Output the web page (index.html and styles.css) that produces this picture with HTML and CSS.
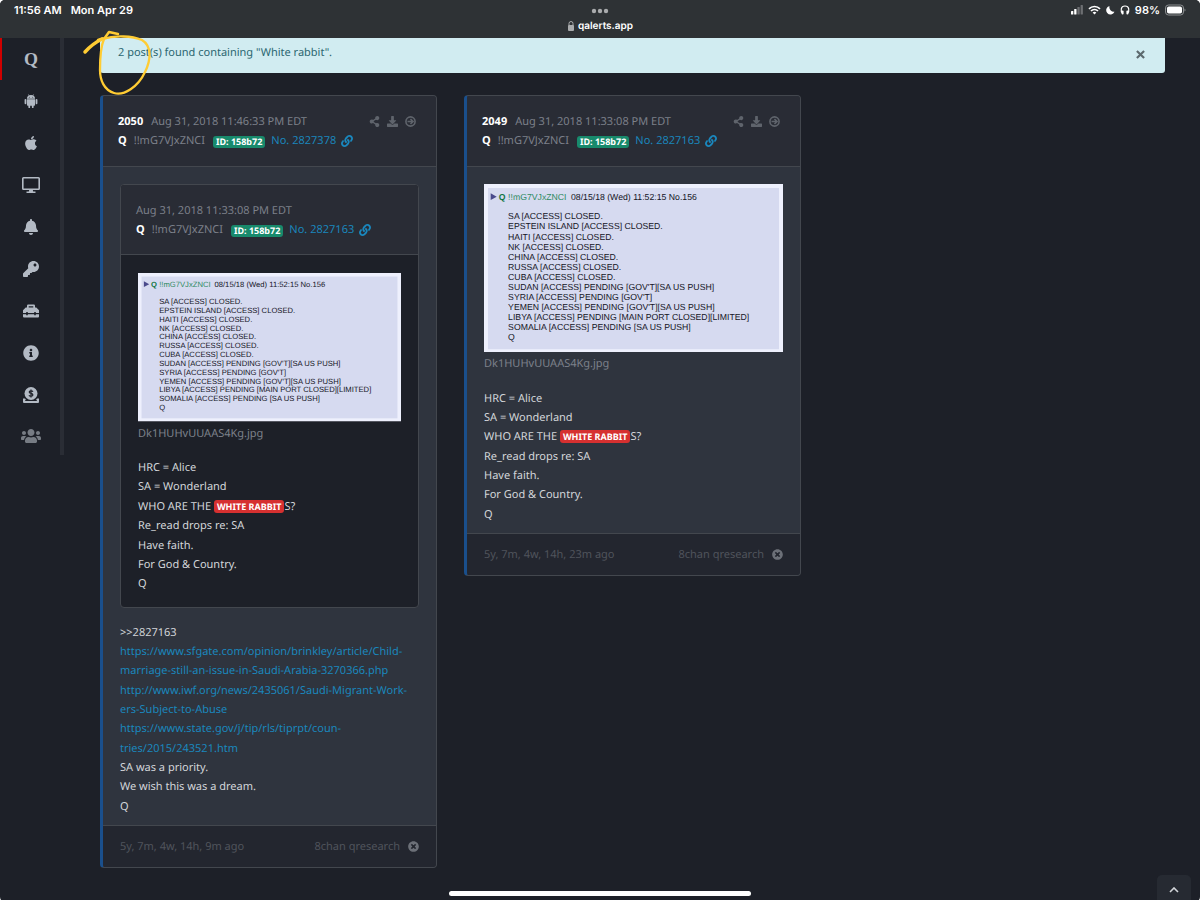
FILE: index.html
```html
<!DOCTYPE html>
<html lang="en">
<head>
<meta charset="utf-8">
<meta name="viewport" content="width=device-width, initial-scale=1">
<title>qalerts.app</title>
<link rel="stylesheet" href="styles.css">
</head>
<body>
<svg class="defs" aria-hidden="true">
  <symbol id="share" viewBox="0 0 448 512"><path d="M352 320c-22.608 0-43.387 7.819-59.79 20.895l-102.486-64.054a96.551 96.551 0 0 0 0-41.683l102.486-64.054C308.613 184.181 329.392 192 352 192c53.019 0 96-42.981 96-96S405.019 0 352 0s-96 42.981-96 96c0 7.158.79 14.13 2.276 20.841L155.79 180.895C139.387 167.819 118.608 160 96 160c-53.019 0-96 42.981-96 96s42.981 96 96 96c22.608 0 43.387-7.819 59.79-20.895l102.486 64.054A96.301 96.301 0 0 0 256 416c0 53.019 42.981 96 96 96s96-42.981 96-96-42.981-96-96-96z"/></symbol>
  <symbol id="download" viewBox="0 0 512 512"><path d="M216 0h80c13.3 0 24 10.7 24 24v168h87.700c17.8 0 26.7 21.5 14.1 34.1L269.7 378.3c-7.5 7.5-19.8 7.5-27.3 0L90.1 226.1c-12.6-12.6-3.7-34.1 14.1-34.1H192V24c0-13.3 10.7-24 24-24zm296 376v112c0 13.3-10.7 24-24 24H24c-13.3 0-24-10.7-24-24V376c0-13.3 10.7-24 24-24h146.7l49 49c20.1 20.1 52.5 20.1 72.6 0l49-49H488c13.3 0 24 10.7 24 24z"/></symbol>
  <symbol id="arrow" viewBox="0 0 24 24"><circle cx="12" cy="12" r="10" fill="none" stroke="currentColor" stroke-width="3.500"/><path d="M5.500 12H17M12 6.500l5.500 5.500-5.500 5.500" fill="none" stroke="currentColor" stroke-width="3.500"/></symbol>
  <symbol id="times" viewBox="0 0 512 512"><path d="M256 8C119 8 8 119 8 256s111 248 248 248 248-111 248-248S393 8 256 8zm121.6 313.1c4.7 4.7 4.7 12.3 0 17L338 377.6c-4.7 4.7-12.3 4.7-17 0L256 312l-65.1 65.6c-4.7 4.7-12.3 4.7-17 0L134.4 338c-4.7-4.7-4.7-12.3 0-17l65.6-65-65.6-65.1c-4.7-4.7-4.7-12.3 0-17l39.6-39.6c4.7-4.7 12.3-4.7 17 0l65 65.7 65.1-65.600c4.7-4.7 12.3-4.7 17 0l39.6 39.6c4.7 4.7 4.7 12.3 0 17L312 256l65.6 65.100z"/></symbol>
  <symbol id="link" viewBox="0 0 512 512"><path d="M326.612 185.391c59.747 59.809 58.927 155.698.36 214.59-.11.12-.24.25-.36.37l-67.2 67.2c-59.27 59.27-155.699 59.262-214.96 0-59.27-59.26-59.27-155.7 0-214.96l37.106-37.106c9.84-9.84 26.786-3.3 27.294 10.606.648 17.722 3.826 35.527 9.69 52.721 1.986 5.822.567 12.262-3.783 16.612l-13.087 13.087c-28.026 28.026-28.905 73.66-1.155 101.96 28.024 28.579 74.086 28.749 102.325.51l67.2-67.19c28.191-28.191 28.073-73.757 0-101.83-3.701-3.694-7.429-6.564-10.341-8.569a16.037 16.037 0 0 1-6.947-12.606c-.396-10.567 3.348-21.456 11.698-29.806l21.054-21.055c5.521-5.521 14.182-6.199 20.584-1.731a152.482 152.482 0 0 1 20.522 17.197zM467.547 44.449c-59.261-59.262-155.69-59.27-214.96 0l-67.2 67.2c-.12.12-.25.25-.36.37-58.566 58.892-59.387 154.781.36 214.59a152.454 152.454 0 0 0 20.521 17.196c6.402 4.468 15.064 3.789 20.584-1.731l21.054-21.055c8.35-8.35 12.094-19.239 11.698-29.806a16.037 16.037 0 0 0-6.947-12.606c-2.912-2.005-6.64-4.875-10.341-8.569-28.073-28.073-28.191-73.639 0-101.83l67.2-67.19c28.239-28.239 74.3-28.069 102.325.51 27.75 28.3 26.872 73.934-1.155 101.96l-13.087 13.087c-4.35 4.35-5.769 10.79-3.783 16.612 5.864 17.194 9.042 34.999 9.69 52.721.509 13.906 17.454 20.446 27.294 10.606l37.106-37.106c59.271-59.259 59.271-155.699.001-214.959z"/></symbol>
</svg>
<div class="screen">
  <header class="status">
    <div class="status-left"><span>11:56 AM</span><span>Mon Apr 29</span></div>
    <div class="status-mid">
      <svg class="dots" viewBox="0 0 18 6" aria-hidden="true"><circle cx="3" cy="3" r="2.200"/><circle cx="9" cy="3" r="2.200"/><circle cx="15" cy="3" r="2.200"/></svg>
      <div class="url"><svg class="lock" viewBox="0 0 8 12" aria-hidden="true"><path d="M2 5.500V3.500a2 2 0 0 1 4 0v2" fill="none" stroke="currentColor"/><rect x="1" y="5" width="6" height="6" rx="1"/></svg>qalerts.app</div>
    </div>
    <div class="status-right">
      <svg class="signal" viewBox="0 0 12 10" aria-hidden="true"><rect y="6" width="2.300" height="3.500" rx=".5"/><rect x="3.200" y="4" width="2.300" height="5.500" rx=".5"/><g opacity=".3"><rect x="6.400" y="2" width="2.300" height="7.500" rx=".5"/><rect x="9.600" width="2.300" height="9.500" rx=".5"/></g></svg>
      <svg class="wifi" viewBox="0 0 13 10" aria-hidden="true"><path d="M1 3.800a7.700 7.700 0 0 1 11 0M3 6a5 5 0 0 1 7 0" fill="none" stroke="currentColor" stroke-width="1.700"/><path d="M4.600 7.600a2.700 2.700 0 0 1 3.800 0L6.500 9.500z"/></svg>
      <svg class="moon" viewBox="0 0 9 10" aria-hidden="true"><path d="M3.500 1A4.300 4.300 0 1 0 8.500 6.800 4.700 4.700 0 0 1 3.500 1z"/></svg>
      <svg class="phones" viewBox="0 0 10 10" aria-hidden="true"><path d="M2.600 8.500C.3 6 .6 1 5 1s4.700 5 2.400 7.500" fill="none" stroke="currentColor" stroke-width="1.200"/><rect x="1.600" y="5.500" width="2" height="4" rx=".9"/><rect x="6.400" y="5.500" width="2" height="4" rx=".9"/></svg>
      <span>98%</span>
      <svg class="battery" viewBox="0 0 21 12" aria-hidden="true"><rect x=".5" y="1" width="18" height="10" rx="3" fill="none" stroke="#8b8e90"/><rect x="2" y="2.500" width="15" height="7" rx="1.800"/><path d="M19.500 4.500v3q1-.5 1-1.500t-1-1.500z" fill="#8b8e90"/></svg>
    </div>
  </header>
  <div class="layout">
    <nav class="side" aria-label="Main">
      <a class="item active" href="#q">Q</a>
      <a class="item" href="#android" aria-label="Android"><svg class="i14" viewBox="0 0 24 24"><path d="M5 9h14v9.500a1.500 1.500 0 0 1-1.500 1.500h-11A1.500 1.500 0 0 1 5 18.500zM7.500 19h3v3.500a1.500 1.500 0 0 1-3 0zM13.500 19h3v3.500a1.500 1.500 0 0 1-3 0zM1 10a1.500 1.500 0 0 1 3 0v6a1.500 1.500 0 0 1-3 0zM20 10a1.500 1.500 0 0 1 3 0v6a1.500 1.500 0 0 1-3 0zM5 8c0-2.300 1.300-4.200 3.200-5.300L7 .8l.7-.5L9 2.300a8 8 0 0 1 6 0L16.300.3l.7.5-1.200 1.900C17.700 3.800 19 5.700 19 8z"/><circle cx="9" cy="5.500" r=".8" fill="#1d2028"/><circle cx="15" cy="5.500" r=".8" fill="#1d2028"/></svg></a>
      <a class="item" href="#ios" aria-label="iOS"><svg class="i16" viewBox="0 0 384 512"><path d="M318.7 268.7c-.2-36.7 16.4-64.4 50-84.8-18.8-26.9-47.2-41.7-84.7-44.6-35.5-2.8-74.3 20.7-88.5 20.7-15 0-49.4-19.7-76.4-19.7C63.3 141.2 4 184.8 4 273.500q0 39.3 14.4 81.2c12.8 36.7 59 126.7 107.2 125.2 25.2-.6 43-17.9 75.8-17.9 31.8 0 48.3 17.9 76.4 17.9 48.6-.7 90.4-82.5 102.6-119.3-65.2-30.7-61.7-90-61.7-91.9zm-56.6-164.2c27.3-32.4 24.8-61.9 24-72.5-24.1 1.4-52 16.4-67.9 34.9-17.5 19.8-27.8 44.3-25.6 71.9 26.1 2 49.9-11.4 69.5-34.3z"/></svg></a>
      <a class="item" href="#desktop" aria-label="Desktop"><svg class="i18" viewBox="0 0 18 18"><path d="M1.500 1h15A1.500 1.500 0 0 1 18 2.500v10a1.500 1.500 0 0 1-1.500 1.500h-5.700l.4 1.500h2.300V17h-9v-1.500h2.300l.4-1.500H1.500A1.500 1.500 0 0 1 0 12.500v-10A1.500 1.500 0 0 1 1.500 1zm.1 1.600v9.800h14.800V2.600z" fill-rule="evenodd"/></svg></a>
      <a class="item" href="#alerts" aria-label="Alerts"><svg class="i16" viewBox="0 0 448 512"><path d="M224 512c35.32 0 63.97-28.65 63.97-64H160.03c0 35.35 28.65 64 63.97 64zm215.39-149.71c-19.32-20.76-55.47-51.99-55.47-154.29 0-77.7-54.48-139.9-127.94-155.16V32c0-17.67-14.32-32-31.98-32s-31.98 14.33-31.98 32v20.84C118.56 68.1 64.08 130.3 64.08 208c0 102.3-36.15 133.53-55.47 154.29-6 6.45-8.66 14.16-8.61 21.71.11 16.4 12.98 32 32.1 32h383.8c19.12 0 32-15.6 32.1-32 .05-7.55-2.61-15.27-8.61-21.710z"/></svg></a>
      <a class="item" href="#key" aria-label="Key"><svg class="i16" viewBox="0 0 512 512"><path d="M512 176.001C512 273.203 433.202 352 336 352c-11.22 0-22.19-1.062-32.827-3.069l-24.012 27.014A23.999 23.999 0 0 1 261.223 384H224v40c0 13.255-10.745 24-24 24h-40v40c0 13.255-10.745 24-24 24H24c-13.255 0-24-10.745-24-24v-78.059c0-6.365 2.529-12.47 7.029-16.971l161.802-161.802C163.108 213.814 160 195.271 160 176 160 78.798 238.797.001 335.999 0 433.488-.001 512 78.511 512 176.001zM336 128c0 26.51 21.49 48 48 48s48-21.49 48-48-21.49-48-48-48-48 21.49-48 48z"/></svg></a>
      <a class="item" href="#tools" aria-label="Toolbox"><svg class="i16" viewBox="0 0 16 16"><path d="M4 4.500V2.700Q4 1.500 5.200 1.500h5.600q1.200 0 1.200 1.200v1.800h1.300l2.700 2.700v2.900h-3.200v-1h-1.600v1H4.800v-1H3.200v1H0V7.200l2.700-2.700zm1.700 0h4.600V3.200H5.700zM0 11.200h3.200v1h1.600v-1h6.400v1h1.600v-1H16v2.300q0 1-1 1H1q-1 0-1-1z" fill-rule="evenodd"/></svg></a>
      <a class="item" href="#info" aria-label="Info"><svg class="i16" viewBox="0 0 512 512"><path d="M256 8C119.043 8 8 119.083 8 256c0 136.997 111.043 248 248 248s248-111.003 248-248C504 119.083 392.957 8 256 8zm0 110c23.196 0 42 18.804 42 42s-18.804 42-42 42-42-18.804-42-42 18.804-42 42-42zm56 254c0 6.627-5.373 12-12 12h-88c-6.627 0-12-5.373-12-12v-24c0-6.627 5.373-12 12-12h12v-64h-12c-6.627 0-12-5.373-12-12v-24c0-6.627 5.373-12 12-12h64c6.627 0 12 5.373 12 12v100h12c6.627 0 12 5.373 12 12v24z"/></svg></a>
      <a class="item" href="#donate" aria-label="Donate"><svg class="i16" viewBox="0 0 16 16"><path d="M0 11.500h2l1 1.500h-.8v.9h11.600V13H13l1-1.500h2V15q0 1-1 1H1q-1 0-1-1z"/><circle cx="8" cy="6.500" r="6.500"/><path d="M10 4.700Q9.400 3.800 8 3.800 6.200 3.800 6.200 5q0 1 1.800 1.400Q9.900 6.800 9.900 8 9.900 9.200 8 9.200 6.500 9.200 5.900 8.300M8 2.500v8" fill="none" stroke="#1d2028" stroke-width="1.200"/></svg></a>
      <a class="item dim" href="#users" aria-label="Users"><svg class="i20" viewBox="0 0 640 512"><path d="M96 224c35.3 0 64-28.7 64-64s-28.7-64-64-64-64 28.7-64 64 28.7 64 64 64zm448 0c35.3 0 64-28.7 64-64s-28.7-64-64-64-64 28.7-64 64 28.7 64 64 64zm32 32h-64c-17.6 0-33.5 7.1-45.1 18.6 40.3 22.1 68.9 62 75.1 109.4h66c17.7 0 32-14.3 32-32v-32c0-35.3-28.7-64-64-64zm-256 0c61.9 0 112-50.1 112-112S381.9 32 320 32 208 82.1 208 144s50.1 112 112 112zm76.8 32h-8.3c-20.8 10-43.9 16-68.5 16s-47.6-6-68.5-16h-8.3C179.6 288 128 339.6 128 403.2V432c0 26.5 21.5 48 48 48h288c26.5 0 48-21.5 48-48v-28.8c0-63.6-51.6-115.2-115.2-115.2zm-223.7-13.4C161.5 263.1 145.6 256 128 256H64c-35.3 0-64 28.7-64 64v32c0 17.7 14.3 32 32 32h65.9c6.3-47.4 34.9-87.3 75.2-109.4z"/></svg></a>
    </nav>
    <main class="main">
      <div class="alert" role="alert"><span>2 post(s) found containing "White rabbit".</span><button class="close" aria-label="Close"><svg viewBox="0 0 10 10"><path d="M1 1l8 8M9 1L1 9" stroke="currentColor" stroke-width="2.400" fill="none"/></svg></button></div>
      <div class="posts">
        <article class="card post">
          <div class="head">
            <div class="row"><span><strong class="num">2050</strong><time>Aug 31, 2018 11:46:33 PM EDT</time></span>
              <span class="actions"><button aria-label="Share"><svg><use href="#share"/></svg></button><button aria-label="Download"><svg><use href="#download"/></svg></button><button aria-label="Open"><svg><use href="#arrow"/></svg></button></span></div>
            <div class="who"><strong>Q</strong><span>!!mG7VJxZNCI</span><span class="badge">ID: 158b72</span><a href="#2827378">No. 2827378 <svg class="chain"><use href="#link"/></svg></a></div>
          </div>
          <div class="body">
            <div class="card quote">
              <div class="head">
                <div class="row"><time>Aug 31, 2018 11:33:08 PM EDT</time></div>
                <div class="who"><strong>Q</strong><span>!!mG7VJxZNCI</span><span class="badge">ID: 158b72</span><a href="#2827163">No. 2827163 <svg class="chain"><use href="#link"/></svg></a></div>
              </div>
              <div class="body">
                <svg class="shot" viewBox="0 0 447 252">
                  <rect class="shot-edge" width="447" height="252"/><rect class="shot-bg" x="6" y="6" width="435" height="241"/>
                  <path class="shot-tri" d="M10 14v10l9-5z"/>
                  <text x="22" y="24" class="shot-q">Q</text>
                  <text x="36" y="24" class="shot-trip">!!mG7VJxZNCI</text>
                  <text x="130" y="24">08/15/18 (Wed) 11:52:15 No.156</text>
                  <text x="36" y="53">SA [ACCESS] CLOSED.</text>
                  <text x="36" y="68">EPSTEIN ISLAND [ACCESS] CLOSED.</text>
                  <text x="36" y="83">HAITI [ACCESS] CLOSED.</text>
                  <text x="36" y="98">NK [ACCESS] CLOSED.</text>
                  <text x="36" y="113">CHINA [ACCESS] CLOSED.</text>
                  <text x="36" y="128">RUSSA [ACCESS] CLOSED.</text>
                  <text x="36" y="143">CUBA [ACCESS] CLOSED.</text>
                  <text x="36" y="158">SUDAN [ACCESS] PENDING [GOV'T][SA US PUSH]</text>
                  <text x="36" y="173">SYRIA [ACCESS] PENDING [GOV'T]</text>
                  <text x="36" y="188">YEMEN [ACCESS] PENDING [GOV'T][SA US PUSH]</text>
                  <text x="36" y="203">LIBYA [ACCESS] PENDING [MAIN PORT CLOSED][LIMITED]</text>
                  <text x="36" y="218">SOMALIA [ACCESS] PENDING [SA US PUSH]</text>
                  <text x="36" y="233">Q</text>
                </svg>
                <div class="file">Dk1HUHvUUAAS4Kg.jpg</div>
                <div class="text">HRC = Alice<br>SA = Wonderland<br>WHO ARE THE <mark>WHITE RABBIT</mark>S?<br>Re_read drops re: SA<br>Have faith.<br>For God &amp; Country.<br>Q</div>
              </div>
            </div>
            <div class="text">&gt;&gt;2827163
              <a href="#sfgate">https://www.sfgate.com/opinion/brinkley/article/Child-<wbr>marriage-still-an-issue-in-Saudi-Arabia-3270366.php</a>
              <a href="#iwf">http://www.iwf.org/news/2435061/Saudi-Migrant-Work&shy;ers-Subject-to-Abuse</a>
              <a href="#state">https://www.state.gov/j/tip/rls/tiprpt/coun&shy;tries/2015/243521.htm</a>
              SA was a priority.<br>We wish this was a dream.<br>Q</div>
          </div>
          <footer class="foot"><span>5y, 7m, 4w, 14h, 9m ago</span><span class="src">8chan qresearch <svg><use href="#times"/></svg></span></footer>
        </article>
        <article class="card post">
          <div class="head">
            <div class="row"><span><strong class="num">2049</strong><time>Aug 31, 2018 11:33:08 PM EDT</time></span>
              <span class="actions"><button aria-label="Share"><svg><use href="#share"/></svg></button><button aria-label="Download"><svg><use href="#download"/></svg></button><button aria-label="Open"><svg><use href="#arrow"/></svg></button></span></div>
            <div class="who"><strong>Q</strong><span>!!mG7VJxZNCI</span><span class="badge">ID: 158b72</span><a href="#2827163">No. 2827163 <svg class="chain"><use href="#link"/></svg></a></div>
          </div>
          <div class="body">
            <svg class="shot" viewBox="0 0 447 252">
              <rect class="shot-edge" width="447" height="252"/><rect class="shot-bg" x="6" y="6" width="435" height="241"/>
              <path class="shot-tri" d="M10 14v10l9-5z"/>
              <text x="22" y="24" class="shot-q">Q</text>
              <text x="36" y="24" class="shot-trip">!!mG7VJxZNCI</text>
              <text x="130" y="24">08/15/18 (Wed) 11:52:15 No.156</text>
              <text x="36" y="53">SA [ACCESS] CLOSED.</text>
              <text x="36" y="68">EPSTEIN ISLAND [ACCESS] CLOSED.</text>
              <text x="36" y="83">HAITI [ACCESS] CLOSED.</text>
              <text x="36" y="98">NK [ACCESS] CLOSED.</text>
              <text x="36" y="113">CHINA [ACCESS] CLOSED.</text>
              <text x="36" y="128">RUSSA [ACCESS] CLOSED.</text>
              <text x="36" y="143">CUBA [ACCESS] CLOSED.</text>
              <text x="36" y="158">SUDAN [ACCESS] PENDING [GOV'T][SA US PUSH]</text>
              <text x="36" y="173">SYRIA [ACCESS] PENDING [GOV'T]</text>
              <text x="36" y="188">YEMEN [ACCESS] PENDING [GOV'T][SA US PUSH]</text>
              <text x="36" y="203">LIBYA [ACCESS] PENDING [MAIN PORT CLOSED][LIMITED]</text>
              <text x="36" y="218">SOMALIA [ACCESS] PENDING [SA US PUSH]</text>
              <text x="36" y="233">Q</text>
            </svg>
            <div class="file">Dk1HUHvUUAAS4Kg.jpg</div>
            <div class="text">HRC = Alice<br>SA = Wonderland<br>WHO ARE THE <mark>WHITE RABBIT</mark>S?<br>Re_read drops re: SA<br>Have faith.<br>For God &amp; Country.<br>Q</div>
          </div>
          <footer class="foot"><span>5y, 7m, 4w, 14h, 23m ago</span><span class="src">8chan qresearch <svg><use href="#times"/></svg></span></footer>
        </article>
      </div>
    </main>
  </div>
  <svg class="scribble" viewBox="0 0 80 70" aria-hidden="true"><path d="M18 10Q23 8 26 8M24 9L29 2 38 4" fill="none" stroke="#fc3" stroke-width="2.500" stroke-linecap="round" stroke-linejoin="round"/><path d="M5 22Q12 14 22 9" fill="none" stroke="#fc3" stroke-width="3.500" stroke-linecap="round"/><path d="M22 9C36 5 52 6 62 10C72 16 71 30 65 42C58 57 44 66 34 63C24 60 20 50 20 40C20 28 21 16 24 9" fill="none" stroke="#fc3" stroke-width="2.300" stroke-linecap="round"/></svg>
  <div class="home-bar"></div>
  <button class="to-top" aria-label="Back to top"><svg viewBox="0 0 10 6"><path d="M1 5l4-4 4 4" fill="none" stroke="currentColor" stroke-width="1.600"/></svg></button>
</div>
</body>
</html>
```

FILE: styles.css
```css
* { box-sizing: border-box; }
html { background: #fff; }
body { margin: 0; font: 11px/1.76 "Noto Sans", "Open Sans", sans-serif; color: #d3d6da; text-rendering: geometricPrecision; }
svg { display: block; fill: currentColor; }
button { padding: 0; border: 0; background: none; color: inherit; cursor: pointer; }
a { color: #1a87bd; text-decoration: none; }
.defs { position: absolute; width: 0; height: 0; }
.screen { position: relative; min-height: 100vh; background: #1d2028; border-radius: 5px; overflow: hidden; }

.status { display: grid; grid-template-columns: 1fr auto 1fr; height: 38px; padding: 3px 14px 0; background: #2e3235; color: #fff; font: 600 11px/14px Inter, sans-serif; }
.status-left { display: flex; gap: 9px; }
.status-mid { display: flex; flex-direction: column; align-items: center; gap: 5px; padding-top: 5px; }
.dots { width: 18px; height: 6px; color: #a9abad; }
.url { display: flex; align-items: center; gap: 3px; font-size: 10px; }
.lock { width: 8px; height: 12px; color: #a9abad; }
.status-right { display: flex; justify-content: flex-end; align-items: center; align-self: start; gap: 5px; }
.signal { width: 12px; height: 10px; }
.wifi { width: 13px; height: 10px; }
.moon { width: 9px; height: 10px; }
.phones { width: 10px; height: 10px; }
.battery { width: 21px; height: 12px; }

.layout { display: flex; align-items: flex-start; }
.side { flex: 0 0 64px; display: flex; flex-direction: column; border-right: 4px solid #2a2d35; }
.item { height: 42px; display: flex; align-items: center; justify-content: center; color: #b3bac4; border-left: 2px solid transparent; font: 700 18px/1 "Liberation Serif", serif; }
.item.active { border-left-color: #d00000; }
.item.dim { height: 39px; color: #777c84; }
.i14 { width: 14px; height: 14px; }
.i16 { width: 16px; height: 16px; }
.i18 { width: 18px; height: 18px; }
.i20 { width: 20px; height: 16px; }

.main { flex: 1; min-width: 0; padding: 0 35px 34px 36px; }
.alert { display: flex; align-items: center; justify-content: space-between; height: 35px; padding: 0 20px 6px 18px; background: #d1ecf1; color: #2b6670; border-radius: 0 0 3px 3px; }
.close { padding-top: 4px; color: #5c696e; }
.close svg { width: 9px; height: 9px; }
.posts { display: grid; grid-template-columns: repeat(3, 1fr); gap: 27px; align-items: start; margin-top: 22px; }

.card { border: 1px solid #43474e; border-radius: 4px; background: #2f343e; overflow: hidden; }
.post { border-left: 3px solid #1a4f8c; }
.head { padding: 16px 15px 15px; background: #292c35; border-bottom: 1px solid #43474e; color: #7c808a; }
.row { display: flex; justify-content: space-between; align-items: center; }
.num { margin-right: 8px; color: #fff; }
.actions { display: flex; gap: 7px; padding-right: 5px; color: #5f646c; }
.actions svg { width: 11px; height: 11px; }
.who { display: flex; align-items: center; }
.who strong { margin-right: 7px; color: #fff; }
.badge { margin: 2px 6px 0 8px; padding: 0 3px; border-radius: 3px; background: #188a6c; color: #fff; font-size: 9px; font-weight: 700; line-height: 12px; }
.who a { display: flex; align-items: center; gap: 5px; }
.chain { width: 12px; height: 12px; }
.body { padding: 17px 17px 9px; }
.quote { margin-bottom: 15px; background: #1d2028; }
.quote .body { padding: 18px 17px 13px; }
.shot { width: 100%; height: auto; margin-bottom: 2px; font: 13px "Liberation Sans", Arial, sans-serif; fill: #15151f; }
.shot-edge { fill: #eef0fd; }
.shot-bg { fill: #d6daf0; }
.shot-tri { fill: #4a4a8c; }
.shot-q { fill: #117743; font-weight: 700; }
.shot-trip { fill: #2f8a62; }
.file { margin-bottom: 15px; color: #7c808a; }
.text a { display: block; padding-right: 4px; }
mark { padding: 0 3px; border-radius: 3px; background: #d63030; color: #fff; font-size: 9px; font-weight: 700; }
.foot { display: flex; justify-content: space-between; padding: 11px 17px 10px; background: #23262f; border-top: 1px solid #43474e; color: #50545c; }
.src { display: flex; align-items: center; gap: 8px; }
.src svg { width: 11px; height: 11px; color: #6c7078; }

.scribble { position: absolute; left: 80px; top: 30px; width: 80px; height: 70px; }
.home-bar { position: absolute; left: 50%; bottom: 6px; width: 302px; height: 5px; margin-left: -151px; border-radius: 3px; background: #fff; }
.to-top { position: absolute; right: 9px; bottom: 0; width: 34px; height: 27px; border-radius: 5px 5px 0 0; background: #262a32; color: #d3d6da; }
.to-top svg { width: 10px; height: 6px; margin: 3px auto 0; }
```
